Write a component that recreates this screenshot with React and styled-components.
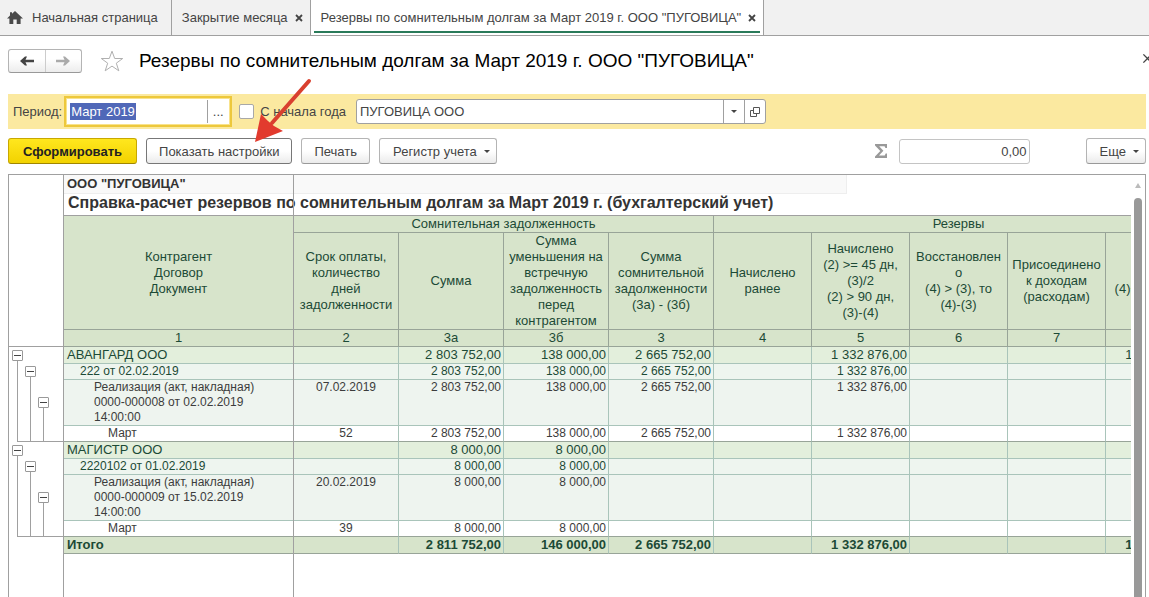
import { useState } from 'react';
import styled, { createGlobalStyle, css } from 'styled-components';

const GlobalStyle = createGlobalStyle`
    * {
        box-sizing: border-box;
    }

    body {
        margin: 0;
        overflow: hidden;
        background: #fff;
        color: #444;
        font-family: "Liberation Sans", Arial, sans-serif;
        font-size: 13px;
    }

    button, input {
        font: inherit;
        color: inherit;
    }
`;

const COLUMNS = [230, 105, 105, 105, 105, 98, 98, 98, 98, 98];

const HEADERS = [
    ['Срок оплаты,', 'количество', 'дней', 'задолженности'],
    ['Сумма'],
    ['Сумма', 'уменьшения на', 'встречную', 'задолженность', 'перед', 'контрагентом'],
    ['Сумма', 'сомнительной', 'задолженности', '(3а) - (3б)'],
    ['Начислено', 'ранее'],
    ['Начислено', '(2) >= 45 дн,', '(3)/2', '(2) > 90 дн,', '(3)-(4)'],
    ['Восстановлен', 'о', '(4) > (3), то', '(4)-(3)'],
    ['Присоединено', 'к доходам', '(расходам)'],
    ['Итого', '(4)+(5)-(6)-(7)'],
];

const NUMBERS = ['1', '2', '3а', '3б', '3', '4', '5', '6', '7', '8'];

const AVANGARD = ['2 803 752,00', '138 000,00', '2 665 752,00', '', '1 332 876,00', '', '', '1 332 876,00'];
const MAGISTR = ['8 000,00', '8 000,00', '', '', '', '', '', ''];

const ROWS = [
    { level: 0, name: ['АВАНГАРД ООО'], term: '', sums: AVANGARD },
    { level: 1, name: ['222 от 02.02.2019'], term: '', sums: AVANGARD },
    { level: 2, name: ['Реализация (акт, накладная)', '0000-000008 от 02.02.2019', '14:00:00'], term: '07.02.2019', sums: AVANGARD },
    { level: 3, name: ['Март'], term: '52', sums: AVANGARD },
    { level: 0, name: ['МАГИСТР ООО'], term: '', sums: MAGISTR },
    { level: 1, name: ['2220102 от 01.02.2019'], term: '', sums: MAGISTR },
    { level: 2, name: ['Реализация (акт, накладная)', '0000-000009 от 15.02.2019', '14:00:00'], term: '20.02.2019', sums: MAGISTR },
    { level: 3, name: ['Март'], term: '39', sums: MAGISTR },
    { level: 4, name: ['Итого'], term: '', sums: ['2 811 752,00', '146 000,00', '2 665 752,00', '', '1 332 876,00', '', '', '1 332 876,00'] },
];

export default function App() {
    const [period, setPeriod] = useState('Март 2019');
    const [fromYearStart, setFromYearStart] = useState(false);
    const [company, setCompany] = useState('ПУГОВИЦА ООО');

    return (
        <Page>
            <GlobalStyle />
            <Tabs>
                <HomeTab>
                    <HomeIcon />
                    Начальная страница
                </HomeTab>
                <Tab>
                    Закрытие месяца
                    <Cross />
                </Tab>
                <Tab $active>
                    Резервы по сомнительным долгам за Март 2019 г. ООО "ПУГОВИЦА"
                    <Cross />
                </Tab>
            </Tabs>

            <Header>
                <NavButtons>
                    <NavButton aria-label="Назад"><ArrowIcon color="#444" /></NavButton>
                    <NavButton aria-label="Вперед"><ArrowIcon color="#aaa" flip /></NavButton>
                </NavButtons>
                <StarIcon />
                <Title>Резервы по сомнительным долгам за Март 2019 г. ООО "ПУГОВИЦА"</Title>
                <CloseButton aria-label="Закрыть"><Cross thin /></CloseButton>
            </Header>

            <Filters>
                <label htmlFor="period">Период:</label>
                <PeriodFrame>
                    <PeriodValue>
                        <PeriodInput id="period" value={period} onChange={e => setPeriod(e.target.value)} />
                    </PeriodValue>
                    <FieldButton type="button" aria-label="Выбрать период">...</FieldButton>
                </PeriodFrame>
                <CheckLabel>
                    <Checkbox type="checkbox" checked={fromYearStart} onChange={e => setFromYearStart(e.target.checked)} />
                    С начала года
                </CheckLabel>
                <CompanyField>
                    <CompanyInput aria-label="Организация" value={company} onChange={e => setCompany(e.target.value)} />
                    <FieldButton type="button" aria-label="Список"><Caret /></FieldButton>
                    <FieldButton type="button" aria-label="Открыть"><OpenIcon /></FieldButton>
                </CompanyField>
            </Filters>

            <Toolbar>
                <PrimaryButton>Сформировать</PrimaryButton>
                <Button $focused>Показать настройки</Button>
                <Button>Печать</Button>
                <MenuButton>Регистр учета <Caret /></MenuButton>
                <SumGroup>
                    <SigmaIcon />
                    <SumInput aria-label="Сумма" value="0,00" readOnly />
                </SumGroup>
                <MenuButton>Еще <Caret /></MenuButton>
            </Toolbar>

            <Report>
                <Outline>
                    <OutlineHead />
                    <OutlineGroup />
                    <OutlineGroup />
                </Outline>
                <Sheet>
                    <Table>
                        <colgroup>
                            {COLUMNS.map((width, i) => <col key={i} width={width} />)}
                        </colgroup>
                        <thead>
                            <tr>
                                <CompanyCell colSpan={10}><CompanyName>ООО "ПУГОВИЦА"</CompanyName></CompanyCell>
                            </tr>
                            <tr>
                                <ReportTitle colSpan={10}>Справка-расчет резервов по сомнительным долгам за Март 2019 г. (бухгалтерский учет)</ReportTitle>
                            </tr>
                            <HeadRow $height={17}>
                                <th rowSpan={2}><Lines lines={['Контрагент', 'Договор', 'Документ']} /></th>
                                <th colSpan={4}>Сомнительная задолженность</th>
                                <th colSpan={5}>Резервы</th>
                            </HeadRow>
                            <HeadRow $height={97}>
                                {HEADERS.map((lines, i) => <th key={i}><Lines lines={lines} /></th>)}
                            </HeadRow>
                            <HeadRow $height={17}>
                                {NUMBERS.map(number => <th key={number}>{number}</th>)}
                            </HeadRow>
                        </thead>
                        <tbody>
                            {ROWS.map((row, i) => (
                                <DataRow key={i} $level={row.level}>
                                    <NameCell $level={row.level}><Lines lines={row.name} /></NameCell>
                                    <TermCell>{row.term}</TermCell>
                                    {row.sums.map((sum, j) => <SumCell key={j}>{sum}</SumCell>)}
                                </DataRow>
                            ))}
                        </tbody>
                    </Table>
                    <FreezeLine />
                </Sheet>
                <Scrollbar>
                    <svg width="8" height="5" viewBox="0 0 8 5"><path d="M4 0l3 5H1z" fill="#bbb" /></svg>
                    <Thumb />
                </Scrollbar>
            </Report>

            <Pointer />
        </Page>
    );
}

function Lines({ lines }) {
    return lines.map(line => <div key={line}>{line}</div>);
}

function OutlineGroup() {
    return (
        <Group>
            <Branches>
                {[3, 19, 50].map(top => (
                    <Branch key={top} $top={top}>
                        <Toggle aria-label="Свернуть" />
                    </Branch>
                ))}
            </Branches>
            <GroupEnd />
        </Group>
    );
}

function HomeIcon() {
    return (
        <svg width="16" height="14" viewBox="0 0 16 14">
            <path d="M8 0l8 7.4h-2.4V13H9.7V8.4H6.3V13H2.4V7.4H0L3 4.6V1.2h2v1.6z" fill="#4a4a4a" />
        </svg>
    );
}

function Cross({ thin }) {
    const size = thin ? 11 : 8;
    return (
        <svg width={size} height={size} viewBox="0 0 8 8">
            <path d="M1 1l6 6M7 1L1 7" stroke="#444" strokeWidth={thin ? 1 : 1.8} />
        </svg>
    );
}

function ArrowIcon({ color, flip }) {
    return (
        <svg width="14" height="10" viewBox="0 0 14 10">
            <path
                d={flip
                    ? 'M14 5L9 .5H7l1.500 3.200H0v2.600h8.500L7 9.500h2z'
                    : 'M0 5L5 .5h2L5.500 3.700H14v2.600H5.500L7 9.500H5z'}
                fill={color}
            />
        </svg>
    );
}

function StarIcon() {
    return (
        <svg width="24" height="22" viewBox="0 0 24 22">
            <path
                d="M12 1.2l2.7 7.3h8l-6.4 4.7 2.5 7.6L12 16.1l-6.8 4.7 2.5-7.6L1.3 8.5h8z"
                fill="#fff"
                stroke="#b0b0b0"
            />
        </svg>
    );
}

function Caret() {
    return (
        <svg width="6" height="3" viewBox="0 0 6 3">
            <path d="M0 0h6L3 3z" fill="#444" />
        </svg>
    );
}

function OpenIcon() {
    return (
        <svg width="10" height="10" viewBox="0 0 10 10" fill="none" stroke="#555">
            <path d="M3.5.5h6v6h-6zM3.500 3.500H.5v6h6v-3" />
        </svg>
    );
}

function SigmaIcon() {
    return (
        <svg width="12" height="14" viewBox="0 0 12 14">
            <path d="M0 0h12v4h-1.500L9.500 2.200H4.200L8.400 6.800 4 11.600h5.700l1-2.100H12V14H0v-1.500L5.300 7 0 1.400z" fill="#999" />
        </svg>
    );
}

function Pointer() {
    return (
        <PointerSvg width="60" height="66" viewBox="0 0 60 66">
            <path d="M57 3L20 45" stroke="#d9402f" strokeWidth="4" strokeLinecap="round" />
            <path d="M3 64L9 36l7 7 6 5 9 5z" fill="#e23b2e" />
        </PointerSvg>
    );
}

const Page = styled.div`
    position: relative;
    display: flex;
    flex-direction: column;
    height: 100vh;
`;

const Tabs = styled.nav`
    display: flex;
    flex: none;
    height: 36px;
    background: #f1f1f1;
    border-bottom: 1px solid #a0a0a0;
`;

const Tab = styled.button`
    display: flex;
    align-items: center;
    gap: 7px;
    padding: 0 7px 0 10px;
    border: 0;
    border-right: 1px solid #a0a0a0;
    background: none;
    white-space: nowrap;

    ${({ $active }) => $active && css`
        position: relative;
        background: #fff;

        &::after {
            content: "";
            position: absolute;
            left: 3px;
            right: 3px;
            bottom: 2px;
            height: 2px;
            background: #2a7a5a;
        }
    `}
`;

const HomeTab = styled(Tab)`
    gap: 9px;
    padding: 0 13px 0 7px;
`;

const Header = styled.header`
    display: flex;
    align-items: center;
    flex: none;
    height: 58px;
    padding: 0 0 8px 8px;
    overflow: hidden;
`;

const NavButtons = styled.div`
    display: flex;
    width: 74px;
    height: 24px;
    margin-right: 18px;
    border: 1px solid #b4b4b4;
    border-bottom-color: #999;
    border-radius: 3px;
    background: linear-gradient(#fff 40%, #ececec);
`;

const NavButton = styled.button`
    display: flex;
    flex: 1;
    align-items: center;
    justify-content: center;
    border: 0;
    background: none;

    & + & {
        border-left: 1px solid #ccc;
    }
`;

const Title = styled.h1`
    flex: 1;
    margin: 0 0 0 15px;
    color: #000;
    font-size: 19px;
    font-weight: normal;
    white-space: nowrap;
`;

const CloseButton = styled.button`
    display: flex;
    margin-right: -4px;
    padding: 0 0 6px;
    border: 0;
    background: none;
`;

const Filters = styled.form`
    display: flex;
    align-items: center;
    flex: none;
    height: 35px;
    margin: 0 3px 0 8px;
    padding-left: 5px;
    background: #fbe9a0;
`;

const PeriodFrame = styled.div`
    display: flex;
    width: 168px;
    height: 31px;
    margin: 0 7px 0 2px;
    padding: 2px;
    border: 2px solid #edc83c;
    box-shadow: inset 0 0 0 1px #f8e28c;
    background: #fff;
`;

const PeriodValue = styled.div`
    flex: 1;
    padding: 3px 2px;
`;

const PeriodInput = styled.input`
    display: block;
    field-sizing: content;
    height: 17px;
    padding: 0 1px;
    border: 0;
    outline: 0;
    background: #5068b8;
    color: #fff;
`;

const FieldButton = styled.button`
    display: flex;
    align-items: center;
    justify-content: center;
    width: 21px;
    padding: 0;
    border: 0;
    border-left: 1px solid #a0a0a0;
    background: none;
`;

const CheckLabel = styled.label`
    display: flex;
    align-items: center;
    gap: 6px;
    margin-right: 10px;
`;

const Checkbox = styled.input`
    appearance: none;
    width: 15px;
    height: 15px;
    margin: 0;
    border: 1px solid #a8a8a8;
    border-radius: 2px;
    background: #fff;
`;

const CompanyField = styled.div`
    display: flex;
    width: 410px;
    height: 25px;
    border: 1px solid #a0a0a0;
    border-radius: 3px;
    background: #fff;
`;

const CompanyInput = styled.input`
    flex: 1;
    min-width: 0;
    padding: 0 3px;
    border: 0;
    outline: 0;
    background: none;
`;

const Toolbar = styled.div`
    display: flex;
    align-items: center;
    flex: none;
    gap: 9px;
    padding: 9px 3px 10px 8px;
`;

const Button = styled.button`
    display: flex;
    align-items: center;
    justify-content: center;
    gap: 7px;
    height: 26px;
    padding: 0 12px;
    border: 1px solid ${({ $focused }) => ($focused ? '#777' : '#b4b4b4')};
    border-bottom-color: ${({ $focused }) => ($focused ? '#777' : '#999')};
    border-radius: 3px;
    background: linear-gradient(#fff 50%, #ebebeb);
    white-space: nowrap;
`;

const PrimaryButton = styled(Button)`
    padding: 0 14px;
    border-color: #c8a800 #c8a800 #a08600;
    background: linear-gradient(#ffe71e, #f2d200);
    color: #222;
    font-weight: bold;
`;

const MenuButton = styled(Button)`
    padding: 0 6px 0 13px;
`;

const SumGroup = styled.div`
    display: flex;
    align-items: center;
    gap: 12px;
    margin: 0 47px 0 auto;
`;

const SumInput = styled.input`
    width: 131px;
    height: 25px;
    padding: 0 2px;
    border: 1px solid #c4c4c4;
    border-radius: 3px;
    outline: 0;
    text-align: right;
`;

const Report = styled.main`
    display: flex;
    flex: 1;
    min-height: 0;
    margin: 0 3px 0 8px;
    border: 1px solid #a0a0a0;
    border-bottom: 0;
`;

const Outline = styled.div`
    flex: none;
    width: 55px;
    border-right: 1px solid #a0a0a0;
`;

const OutlineHead = styled.div`
    height: 172px;
    border-bottom: 1px solid #a0a0a0;
`;

const Group = styled.div`
    display: flex;
    flex-direction: column;
    height: 95px;
`;

const Branches = styled.div`
    display: flex;
    flex: 1;
    gap: 2px;
    padding-left: 3px;
`;

const Branch = styled.div`
    display: flex;
    flex-direction: column;
    align-items: center;
    width: 11px;
    padding-top: ${({ $top }) => $top}px;

    &::after {
        content: "";
        flex: 1;
        width: 1px;
        background: #a0a0a0;
    }
`;

const GroupEnd = styled.div`
    height: 1px;
    margin-left: 8px;
    background: #a0a0a0;
`;

const Toggle = styled.button`
    display: flex;
    align-items: center;
    justify-content: center;
    width: 11px;
    height: 11px;
    padding: 0;
    border: 1px solid #999;
    border-radius: 1px;
    background: #fff;

    &::before {
        content: "";
        width: 7px;
        height: 1px;
        background: #444;
    }
`;

const Sheet = styled.div`
    position: relative;
    flex: 1;
    min-width: 0;
    overflow: hidden;
`;

const Table = styled.table`
    width: 1140px;
    table-layout: fixed;
    border-collapse: separate;
    border-spacing: 0;
    color: #1c4a36;
    font-size: 13px;
    line-height: 16px;

    th, td {
        padding: 0;
        white-space: nowrap;
    }
`;

const CompanyCell = styled.th`
    height: 19px;
    color: #333;
    text-align: left;
    vertical-align: top;
`;

const CompanyName = styled.div`
    width: 783px;
    height: 19px;
    padding-left: 3px;
    border: solid #eee;
    border-width: 0 1px 1px 0;
    background: #f9f9f9;
    line-height: 18px;
`;

const ReportTitle = styled.th`
    height: 22px;
    border-bottom: 1px solid #a0a0a0;
    color: #333;
    font-size: 16px;
    text-align: left;

    thead tr > && {
        padding: 0 0 4px 4px;
    }
`;

const HeadRow = styled.tr`
    height: ${({ $height }) => $height}px;
    background: #d7e4cb;

    th {
        border: solid #98a498;
        border-width: 0 1px 1px 0;
        font-weight: normal;
    }
`;

const LEVELS = [
    css`height: 17px; background: #e3efdc; font-size: 13px;`,
    css`height: 16px; background: #eef5ef; font-size: 12px;`,
    css`height: 46px; background: #eef4ef; color: #3c3c3c; font-size: 12px;`,
    css`height: 16px; background: #fff; color: #3c3c3c; font-size: 12px;`,
    css`height: 17px; background: #d7e4cb; font-size: 13px; font-weight: bold;`,
];

const DataRow = styled.tr`
    line-height: 15px;
    ${({ $level }) => LEVELS[$level]}

    td {
        border: solid #a9c4ba;
        border-width: 0 1px 1px 0;
        border-bottom-color: ${({ $level }) => ($level > 2 ? '#98a498' : '#a9c4ba')};
        vertical-align: top;
    }
`;

const INDENTS = [3, 16, 30, 44, 3];

const NameCell = styled.td`
    ${DataRow} && {
        padding-left: ${({ $level }) => INDENTS[$level]}px;
    }
`;

const TermCell = styled.td`
    text-align: center;
`;

const SumCell = styled.td`
    ${DataRow} && {
        padding-right: 2px;
        text-align: right;
    }
`;

const FreezeLine = styled.div`
    position: absolute;
    top: 0;
    bottom: 0;
    left: 229px;
    width: 1px;
    background: #a0a0a0;
`;

const Scrollbar = styled.div`
    display: flex;
    flex-direction: column;
    align-items: center;
    flex: none;
    gap: 10px;
    width: 14px;
    padding-top: 8px;
`;

const Thumb = styled.div`
    flex: 1;
    width: 8px;
    border-radius: 4px 4px 0 0;
    background: #999;
`;

const PointerSvg = styled.svg`
    position: absolute;
    top: 78px;
    left: 252px;
    fill: none;
    pointer-events: none;
`;
